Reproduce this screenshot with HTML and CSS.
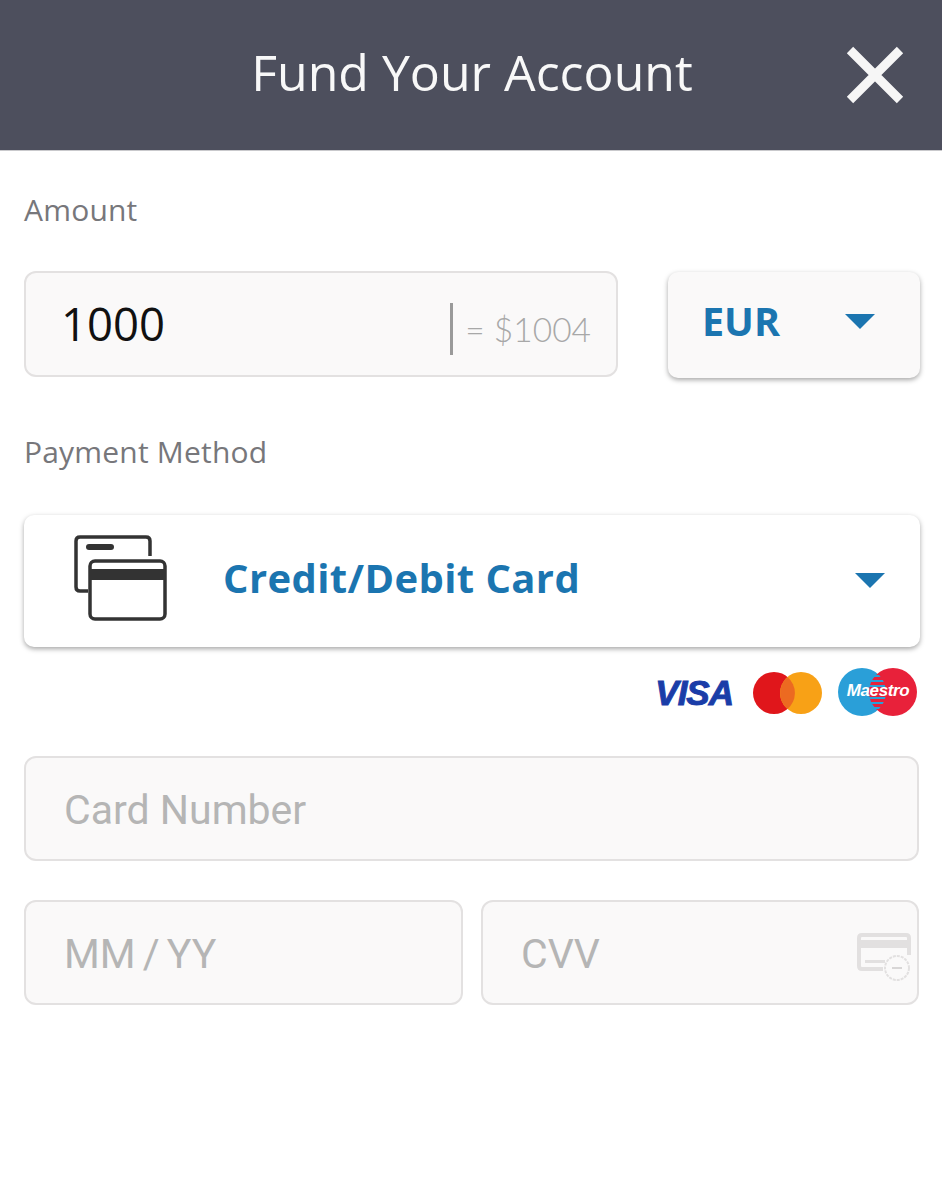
FILE: index.html
```html
<!DOCTYPE html>
<html lang="en">
  <head>
    <meta charset="UTF-8" />
    <meta name="viewport" content="width=device-width, initial-scale=1.0" />
    <title>Fund Your Account</title>
    <link rel="stylesheet" href="styles.css">
  </head>
  <body>
    <header class="top-bar">
      <h1>Fund Your Account</h1>
      <button class="close-btn" type="button" aria-label="Close">
        <svg width="58" height="58" viewBox="0 0 58 58">
          <path d="M4 4 L54 54 M54 4 L4 54" stroke="#f6f6f6" stroke-width="9" fill="none" />
        </svg>
      </button>
    </header>
    <form class="fund-form" autocomplete="off">
      <label class="field-label amount-label">Amount</label>
      <div class="amount-row">
        <div class="field amount-field">
          <span class="amount-value">1000</span>
          <span class="amount-sep"></span>
          <span class="amount-converted">= $1004</span>
        </div>
        <div class="currency-select">
          <span>EUR</span>
          <span class="caret"></span>
        </div>
      </div>
      <label class="field-label method-label">Payment Method</label>
      <div class="method-select">
        <svg class="method-icon" width="94" height="88" viewBox="0 0 94 88">
          <path d="M14 57 H6 Q2 57 2 53 V7 Q2 3 6 3 H72 Q76 3 76 7 V22" fill="none" stroke="#333" stroke-width="3.5" />
          <rect x="12" y="10" width="28" height="6" rx="3" fill="#333" />
          <rect x="16" y="27" width="75" height="58" rx="5" fill="#fff" stroke="#333" stroke-width="3.5" />
          <rect x="16" y="35" width="75" height="11" fill="#333" />
        </svg>
        <span class="method-name">Credit/Debit Card</span>
        <span class="caret"></span>
      </div>
      <div class="card-logos">
        <span class="visa">VISA</span>
        <svg class="mastercard" width="69" height="44" viewBox="0 0 69 44">
          <circle cx="21" cy="22" r="21" fill="#e0161b" />
          <circle cx="48" cy="22" r="21" fill="#f8a116" />
          <path d="M34.5 6 A21 21 0 0 1 34.5 38 A21 21 0 0 1 34.5 6" fill="#ec6a21" />
        </svg>
        <div class="maestro">
          <svg width="80" height="48" viewBox="0 0 80 48">
            <defs>
              <clipPath id="maestroBlue">
                <circle cx="24" cy="24" r="24" />
              </clipPath>
            </defs>
            <circle cx="24" cy="24" r="24" fill="#2a9fd8" />
            <circle cx="55" cy="24" r="24" fill="#e8213a" />
            <g clip-path="url(#maestroBlue)" stroke="#2a9fd8" stroke-width="2">
              <path d="M31 8 H48 M31 13 H48 M31 18 H48 M31 30 H48 M31 35 H48 M31 40 H48" />
            </g>
          </svg>
          <span>Maestro</span>
        </div>
      </div>
      <div class="field card-field">
        <span class="placeholder">Card Number</span>
      </div>
      <div class="expiry-row">
        <div class="field">
          <span class="placeholder expiry-text">MM / YY</span>
        </div>
        <div class="field cvv-field">
          <span class="placeholder">CVV</span>
          <svg class="cvv-icon" width="54" height="48" viewBox="0 0 54 48">
            <path d="M26 36 H5 Q2 36 2 33 V5 Q2 2 5 2 H49 Q52 2 52 5 V22" fill="none" stroke="#e2e0e0" stroke-width="4" />
            <rect x="2" y="7" width="50" height="8" fill="#e2e0e0" />
            <rect x="8" y="27" width="20" height="3" fill="#e2e0e0" />
            <circle cx="40" cy="35" r="12" fill="#faf9f9" stroke="#e2e0e0" stroke-width="2" stroke-dasharray="3 1" />
            <rect x="35" y="34" width="10" height="2" fill="#d8d6d6" />
          </svg>
        </div>
      </div>
    </form>
  </body>
</html>
```

FILE: styles.css
```css
* {
  box-sizing: border-box;
}
body {
  margin: 0;
  height: 1182px;
  background: #fff;
  font-family: "Open Sans", sans-serif;
  overflow: hidden;
}
.top-bar {
  height: 151px;
  background: #4d4f5d;
  border-bottom: 1px solid #c9c9cc;
  display: flex;
  align-items: center;
  justify-content: center;
  position: relative;
}
.top-bar h1 {
  margin: 0 0 6px 2px;
  color: #f8f8f8;
  font-size: 50px;
  font-weight: 400;
}
.close-btn {
  position: absolute;
  right: 38px;
  top: 46px;
  padding: 0;
  width: 58px;
  height: 58px;
  border: none;
  background: none;
}
.fund-form {
  padding: 0 22px 0 24px;
}
.field-label {
  display: block;
  color: #77777b;
  font-size: 30px;
  letter-spacing: 0.2px;
  line-height: 40px;
}
.amount-label {
  margin-top: 39px;
}
.amount-row {
  display: flex;
  justify-content: space-between;
  margin-top: 41px;
}
.field {
  height: 105px;
  background: #faf9f9;
  border: 2.5px solid #e3e1e1;
  border-radius: 12px;
  display: flex;
  align-items: center;
  padding: 0 38px;
}
.amount-field {
  width: 594px;
  height: 106px;
  padding-left: 35px;
  padding-right: 25px;
}
.amount-value {
  margin-bottom: 2px;
  color: #111;
  font-size: 45.5px;
  flex: 1;
}
.amount-sep {
  width: 3px;
  height: 52px;
  margin-top: 10px;
  margin-right: 12px;
  background: #9a9a9a;
}
.amount-converted {
  margin-top: 10px;
  color: #a8a8a8;
  font-family: "Lato", sans-serif;
  font-size: 33.5px;
  font-weight: 300;
}
.currency-select {
  width: 252px;
  height: 106px;
  margin-top: 1px;
  background: #faf9f9;
  border-radius: 10px;
  box-shadow: 0 2px 5px rgba(0, 0, 0, 0.35);
  display: flex;
  align-items: center;
  justify-content: space-between;
  padding: 0 45px 8px 34px;
  color: #1b75b0;
  font-size: 39.5px;
  font-weight: 700;
}
.caret {
  width: 0;
  height: 0;
  border-left: 15px solid transparent;
  border-right: 15px solid transparent;
  border-top: 15px solid #1b75b0;
}
.method-label {
  margin-top: 54px;
}
.method-select {
  height: 132px;
  margin-top: 43px;
  background: #fff;
  border-radius: 10px;
  box-shadow: 0 2px 5px rgba(0, 0, 0, 0.35);
  display: flex;
  align-items: center;
  padding: 0 35px 0 50px;
}
.method-icon {
  margin-bottom: 6px;
}
.method-name {
  flex: 1;
  margin-left: 55px;
  margin-bottom: 8px;
  color: #1b75b0;
  font-size: 40px;
  font-weight: 700;
  letter-spacing: 0.4px;
}
.method-select .caret {
  margin-bottom: 2px;
}
.card-logos {
  display: flex;
  align-items: center;
  justify-content: flex-end;
  height: 48px;
  margin-top: 21px;
  padding-right: 2px;
}
.visa {
  margin-top: 2px;
  color: #1a3da8;
  font-family: "Liberation Sans", sans-serif;
  font-size: 35px;
  font-style: italic;
  font-weight: 700;
  letter-spacing: -1px;
  -webkit-text-stroke: 1px #1a3da8;
}
.mastercard {
  margin-left: 20px;
  margin-top: 2px;
}
.maestro {
  position: relative;
  width: 80px;
  height: 48px;
  margin-left: 16px;
}
.maestro span {
  position: absolute;
  left: 0;
  right: 0;
  top: 13px;
  color: #fff;
  font-family: "Liberation Sans", sans-serif;
  font-size: 17px;
  font-style: italic;
  font-weight: 700;
  letter-spacing: -0.4px;
  text-align: center;
}
.card-field {
  margin-top: 40px;
  width: 895px;
}
.placeholder {
  margin-top: 3px;
  color: #b5b5b5;
  font-family: "Roboto", sans-serif;
  font-size: 41px;
}
.expiry-text {
  word-spacing: -3px;
}
.expiry-row {
  display: flex;
  gap: 18px;
  margin-top: 39px;
  width: 895px;
}
.expiry-row .field {
  width: 439px;
}
.cvv-field {
  flex: 1;
  justify-content: space-between;
  padding: 0 6px 0 38px;
}
.cvv-icon {
  margin-top: 8px;
}
```
